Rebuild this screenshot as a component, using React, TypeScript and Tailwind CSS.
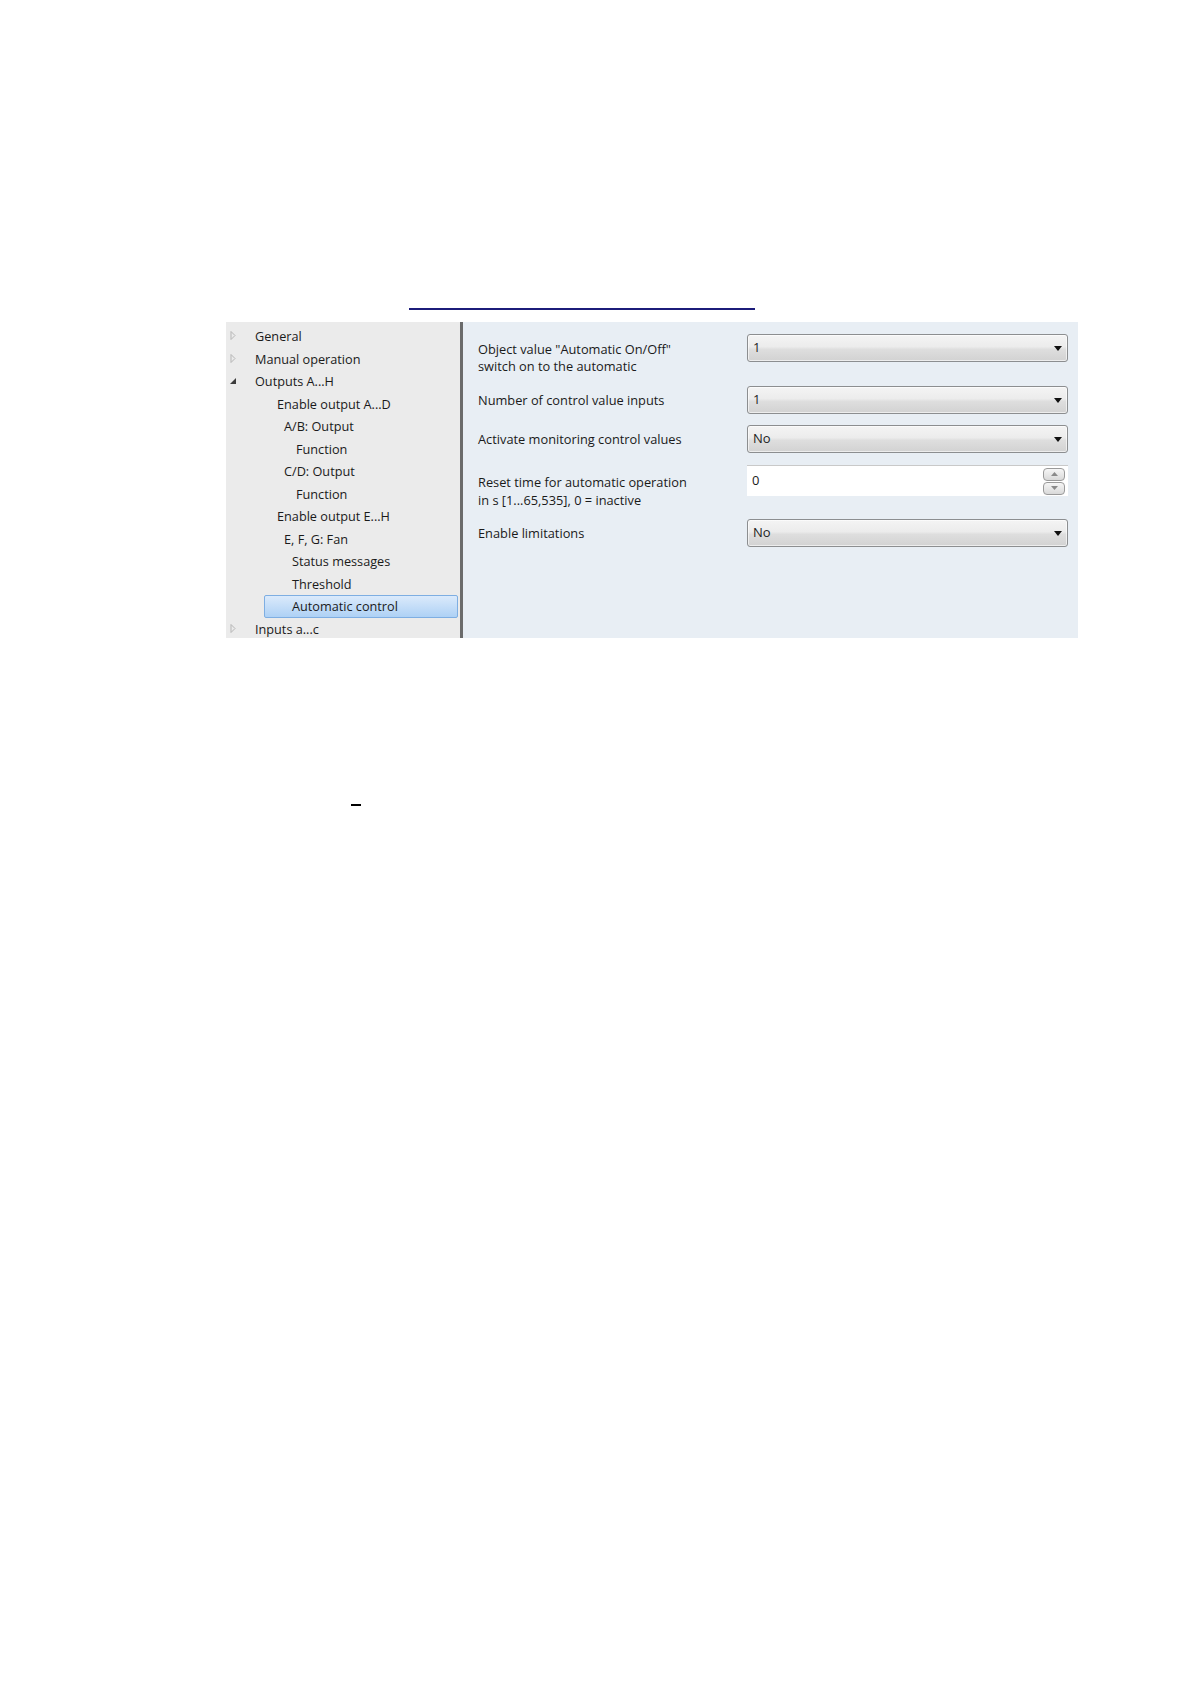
import React from "react";

type TreeItem = {
  label: string;
  indent: number;
  arrow?: "closed" | "open";
  selected?: boolean;
};

const treeItems: TreeItem[] = [
  { label: "General", indent: 29, arrow: "closed" },
  { label: "Manual operation", indent: 29, arrow: "closed" },
  { label: "Outputs A...H", indent: 29, arrow: "open" },
  { label: "Enable output A...D", indent: 51 },
  { label: "A/B: Output", indent: 58 },
  { label: "Function", indent: 70 },
  { label: "C/D: Output", indent: 58 },
  { label: "Function", indent: 70 },
  { label: "Enable output E...H", indent: 51 },
  { label: "E, F, G: Fan", indent: 58 },
  { label: "Status messages", indent: 66 },
  { label: "Threshold", indent: 66 },
  { label: "Automatic control", indent: 66, selected: true },
  { label: "Inputs a...c", indent: 29, arrow: "closed" },
];

function TreeArrow({ kind }: { kind: "closed" | "open" }) {
  if (kind === "open") {
    return (
      <svg width="8" height="8" viewBox="0 0 8 8" className="absolute left-[3px] top-[7px]">
        <path d="M7 1 L7 7 L1 7 Z" fill="#3c3c3c" />
      </svg>
    );
  }
  return (
    <svg width="6" height="9" viewBox="0 0 6 9" className="absolute left-[4px] top-[6px]">
      <path d="M1 0.5 L5 4.5 L1 8.5 Z" fill="none" stroke="#b5b5b5" strokeWidth="1" />
    </svg>
  );
}

function Dropdown({ value }: { value: string }) {
  return (
    <div className="flex h-[28px] w-[321px] items-center justify-between rounded-[3px] border border-[#8c8e90] bg-[linear-gradient(to_bottom,#f4f4f4_0%,#ececec_45%,#dedede_55%,#d2d2d2_100%)] pl-[5px] pr-[5px] shadow-[inset_0_0_0_1px_rgba(255,255,255,0.6)]">
      <span className="text-[13px] text-[#1e1e1e]">{value}</span>
      <svg width="8" height="5" viewBox="0 0 8 5">
        <path d="M0 0 L8 0 L4 5 Z" fill="#111" />
      </svg>
    </div>
  );
}

function Spinner() {
  return (
    <div className="flex flex-col gap-[1px]">
      {["up", "down"].map((d) => (
        <div
          key={d}
          className="flex h-[13px] w-[22px] items-center justify-center rounded-[4px] border border-[#9a9a9a] bg-[linear-gradient(to_bottom,#f6f6f6,#d9d9d9)]"
        >
          <svg width="7" height="4" viewBox="0 0 7 4">
            <path d={d === "up" ? "M0 4 L7 4 L3.5 0 Z" : "M0 0 L7 0 L3.5 4 Z"} fill="#8a8a8a" />
          </svg>
        </div>
      ))}
    </div>
  );
}

export default function App() {
  return (
    <div className="h-[1684px] w-full bg-white font-['Open_Sans','Noto_Sans',sans-serif] text-[#1a1a1a]">
      <div className="pt-[308px]">
        <div className="ml-[409px] h-[2px] w-[346px] bg-[#1c1c7a]" />

        <div className="ml-[226px] mt-[12px] flex h-[316px] w-[852px]">
          {/* tree */}
          <div className="w-[234px] bg-[#ebebeb] pt-[3px]">
            {treeItems.map((item, i) => (
              <div key={i} className="relative h-[22.5px] text-[12.7px] leading-[22.5px]">
                {item.arrow && <TreeArrow kind={item.arrow} />}
                {item.selected ? (
                  <div className="absolute left-[38px] right-[2px] top-0 h-[23px] rounded-[2px] border border-[#7eaee2] bg-[linear-gradient(to_bottom,#dbeafb,#aed1f5)]" />
                ) : null}
                <span className="relative" style={{ paddingLeft: item.indent }}>
                  {item.label}
                </span>
              </div>
            ))}
          </div>

          <div className="w-[3px] bg-[#6b6b6b]" />

          {/* parameters */}
          <div className="flex-1 bg-[#e8eef4] pt-[12px] text-[12.8px]">
            <div className="flex h-[52px] items-start">
              <div className="ml-[15px] mt-[7px] w-[269px] leading-[17px]">
                Object value "Automatic On/Off"
                <br />
                switch on to the automatic
              </div>
              <Dropdown value="1" />
            </div>

            <div className="flex h-[39px] items-start">
              <div className="ml-[15px] w-[269px] leading-[28px]">Number of control value inputs</div>
              <Dropdown value="1" />
            </div>

            <div className="flex h-[40px] items-start">
              <div className="ml-[15px] w-[269px] leading-[28px]">Activate monitoring control values</div>
              <Dropdown value="No" />
            </div>

            <div className="flex h-[54px] items-start">
              <div className="ml-[15px] mt-[8px] w-[269px] leading-[18px]">
                Reset time for automatic operation
                <br />
                in s [1...65,535], 0 = inactive
              </div>
              <div className="flex h-[31px] w-[321px] items-center justify-between border-t border-[#c9c9c9] bg-white pl-[5px] pr-[3px]">
                <span className="text-[13px]">0</span>
                <Spinner />
              </div>
            </div>

            <div className="flex items-start">
              <div className="ml-[15px] w-[269px] leading-[28px]">Enable limitations</div>
              <Dropdown value="No" />
            </div>
          </div>
        </div>

        <div className="ml-[351px] mt-[166px] h-[2px] w-[10px] bg-black" />
      </div>
    </div>
  );
}
